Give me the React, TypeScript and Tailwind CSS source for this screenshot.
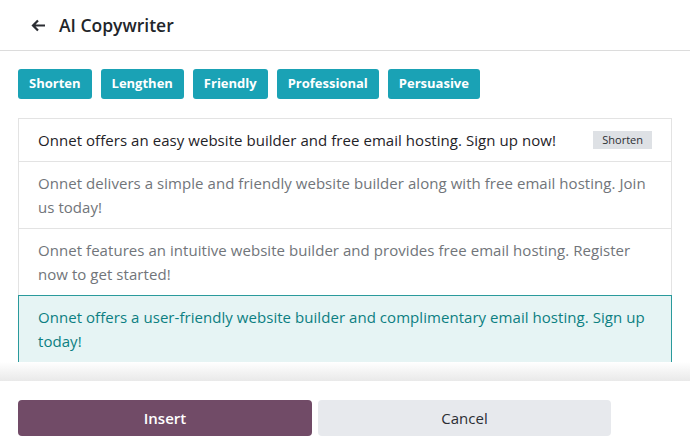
import React from "react";

const font = { fontFamily: '"Open Sans", "Noto Sans", sans-serif' };

export default function App() {
  const tags = ["Shorten", "Lengthen", "Friendly", "Professional", "Persuasive"];
  return (
    <div className="w-[690px] h-[445px] bg-white flex flex-col overflow-hidden" style={font}>
      <div className="h-[51px] shrink-0 border-b border-[#dcdcdc] flex items-center pl-[31px]">
        <svg width="15" height="13" viewBox="0 0 15 13" className="mr-[13px]">
          <path d="M14 6.5H2.5M7 1.5L2 6.5L7 11.5" stroke="#2b2d33" strokeWidth="2.2" fill="none" strokeLinejoin="miter" />
        </svg>
        <span className="text-[17.5px] font-semibold text-[#22252a]">AI Copywriter</span>
      </div>
      <div className="px-[18px] pt-[18px] flex-1 min-h-0">
        <div className="flex gap-[9px]">
          {tags.map((t) => (
            <div key={t} className="h-[30px] px-[11px] rounded-[3px] bg-[#1aa2b5] text-white text-[13px] font-bold flex items-center">
              {t}
            </div>
          ))}
        </div>
        <div className="mt-[19px] border border-[#e3e3e3] text-[15px] leading-[24px] tracking-[0.05px]">
          <div className="h-[43px] flex items-center justify-between pl-[19px] pr-[19px] border-b border-[#e3e3e3] text-[#1f2328]">
            <span>Onnet offers an easy website builder and free email hosting. Sign up now!</span>
            <span className="bg-[#dee1e5] text-[#2c2f33] text-[11px] leading-[18px] px-[9px] tracking-normal">Shorten</span>
          </div>
          <div className="px-[19px] py-[9px] border-b border-[#e3e3e3] text-[#71757a]">
            Onnet delivers a simple and friendly website builder along with free email hosting. Join us today!
          </div>
          <div className="px-[19px] py-[9px] border-b border-[#e3e3e3] text-[#71757a]">
            Onnet features an intuitive website builder and provides free email hosting. Register now to get started!
          </div>
          <div className="px-[19px] py-[9px] -m-px border border-[#2a9a9c] bg-[#e6f4f4] text-[#0c7f82]">
            Onnet offers a user-friendly website builder and complimentary email hosting. Sign up today!
          </div>
        </div>
      </div>
      <div className="h-[19px] shrink-0 bg-gradient-to-b from-white to-[#e9e9e9]" />
      <div className="h-[64px] shrink-0 bg-white px-[18px] pt-[19px] flex gap-[6px]">
        <button className="w-[294px] h-[36px] rounded-[4px] bg-[#714b67] text-white text-[15px] font-semibold">Insert</button>
        <button className="w-[293px] h-[36px] rounded-[4px] bg-[#e7e9ed] text-[#2b2e33] text-[15px] font-medium">Cancel</button>
      </div>
    </div>
  );
}
